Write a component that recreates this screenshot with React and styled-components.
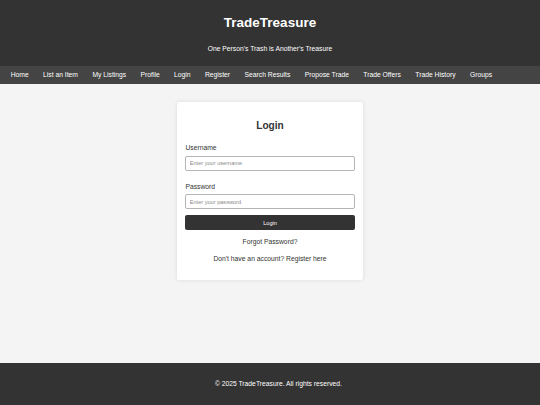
import React from "react";
import styled, { createGlobalStyle } from "styled-components";

const Global = createGlobalStyle`
  html, body { margin: 0; padding: 0; }
  body {
    background: #f4f4f4;
    font-family: "Liberation Sans", Arial, sans-serif;
    color: #333;
  }
  * { box-sizing: border-box; }
`;

const Page = styled.div`
  display: flex;
  flex-direction: column;
  min-height: 100vh;
`;

const Header = styled.header`
  background: #333;
  color: #fff;
  height: 66px;
  padding-top: 15.3px;
  text-align: center;
`;

const Title = styled.h1`
  margin: 0;
  font-size: 13.5px;
  line-height: 16px;
  font-weight: bold;
`;

const Tagline = styled.p`
  margin: 13.7px 0 0;
  font-size: 6.75px;
  line-height: 8px;
`;

const Nav = styled.nav`
  background: #444;
  height: 18px;
  display: flex;
  align-items: center;
  gap: 14.4px;
  padding-left: 10.7px;
`;

const NavLink = styled.a`
  color: #fff;
  text-decoration: none;
  font-size: 6.75px;
  line-height: 18px;
  white-space: nowrap;
`;

const Main = styled.main`
  flex: 1;
  display: flex;
  justify-content: center;
  align-items: flex-start;
  padding-top: 18px;
`;

const Card = styled.div`
  width: 186px;
  background: #fff;
  padding: 8.4px;
  border-radius: 2.5px;
  box-shadow: 0 0 4px rgba(0, 0, 0, 0.1);
`;

const CardTitle = styled.h2`
  margin: 9.6px 0 12.4px;
  font-size: 10.1px;
  line-height: 12px;
  font-weight: bold;
  text-align: center;
  color: #333;
`;

const Field = styled.div`
  display: flex;
  flex-direction: column;
  margin-bottom: ${(p) => p.$gap}px;
`;

const Label = styled.label`
  font-size: 6.75px;
  line-height: 8px;
  color: #333;
  margin-bottom: 3.6px;
`;

const Input = styled.input`
  height: 14.7px;
  width: 100%;
  border: 1px solid #b5b5b5;
  border-radius: 2px;
  padding: 0 3.4px;
  font-family: "Liberation Sans", Arial, sans-serif;
  font-size: 5.6px;
  color: #333;
  outline: none;
  &::placeholder { color: #8a8a8a; }
`;

const Button = styled.button`
  display: block;
  width: 100%;
  height: 15px;
  border: none;
  border-radius: 2px;
  background: #333;
  color: #fff;
  font-family: "Liberation Sans", Arial, sans-serif;
  font-size: 5.6px;
  padding: 0;
`;

const Line = styled.p`
  margin: ${(p) => p.$top}px 0 ${(p) => p.$bottom || 0}px;
  font-size: 6.75px;
  line-height: 8px;
  text-align: center;
  color: #333;
`;

const TextLink = styled.a`
  color: #333;
  text-decoration: none;
`;

const Footer = styled.footer`
  background: #333;
  color: #fff;
  height: 42px;
  display: flex;
  align-items: center;
  justify-content: center;
  padding-left: 16.8px;
  font-size: 6.75px;
  line-height: 8px;
`;

const links = [
  "Home",
  "List an Item",
  "My Listings",
  "Profile",
  "Login",
  "Register",
  "Search Results",
  "Propose Trade",
  "Trade Offers",
  "Trade History",
  "Groups",
];

export default function App() {
  return (
    <Page>
      <Global />
      <Header>
        <Title>TradeTreasure</Title>
        <Tagline>One Person's Trash is Another's Treasure</Tagline>
      </Header>
      <Nav>
        {links.map((l) => (
          <NavLink key={l} href="#">
            {l}
          </NavLink>
        ))}
      </Nav>
      <Main>
        <Card>
          <CardTitle>Login</CardTitle>
          <Field $gap={12}>
            <Label htmlFor="username">Username</Label>
            <Input id="username" type="text" placeholder="Enter your username" />
          </Field>
          <Field $gap={6.3}>
            <Label htmlFor="password">Password</Label>
            <Input id="password" type="password" placeholder="Enter your password" />
          </Field>
          <Button type="button">Login</Button>
          <Line $top={7.7}>
            <TextLink href="#">Forgot Password?</TextLink>
          </Line>
          <Line $top={9.3} $bottom={8.3}>
            Don't have an account? <TextLink href="#">Register here</TextLink>
          </Line>
        </Card>
      </Main>
      <Footer>© 2025 TradeTreasure. All rights reserved.</Footer>
    </Page>
  );
}
